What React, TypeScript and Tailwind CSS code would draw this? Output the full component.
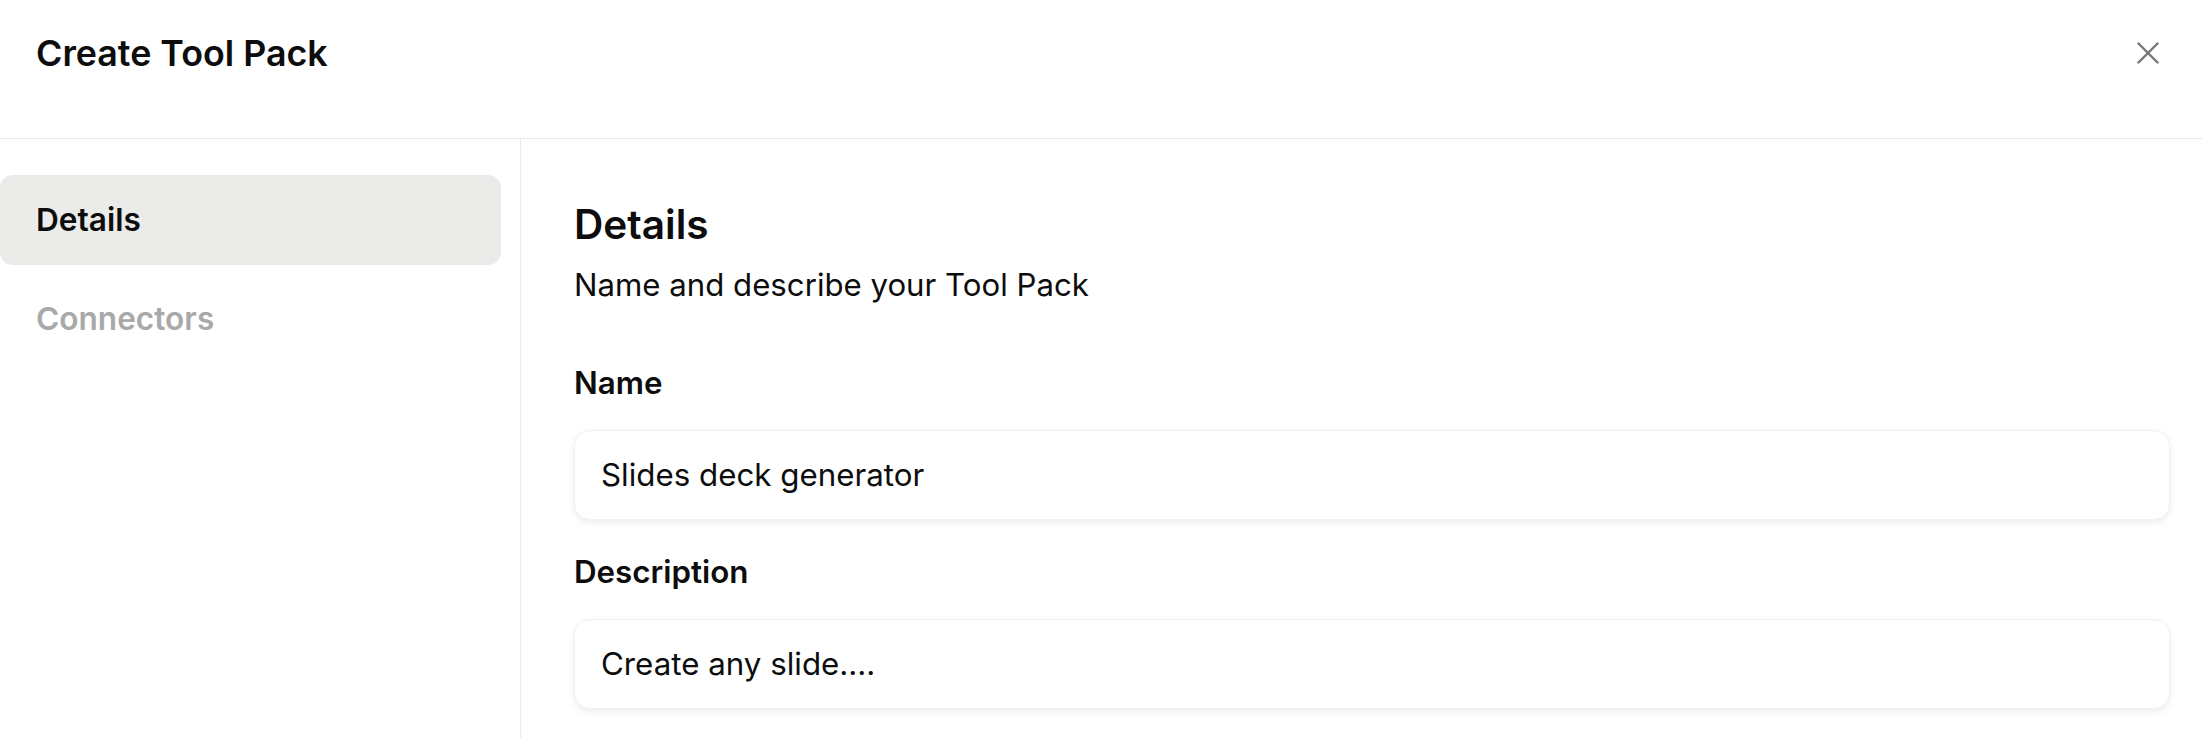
import React from 'react';

const CloseIcon: React.FC = () => (
  <svg width="22" height="22" viewBox="0 0 22 22" fill="none" stroke="#767676" strokeWidth="2.4" strokeLinecap="round">
    <path d="M1.5 1.5 L20.5 20.5" />
    <path d="M20.5 1.5 L1.5 20.5" />
  </svg>
);

const Field: React.FC<{ label: string; value: string; className?: string }> = ({ label, value, className }) => (
  <div className={className}>
    <div className="text-[31.3px] leading-[40px] font-semibold text-[#0d0d0d]">{label}</div>
    <div className="mt-[27px] h-[90px] flex items-center px-[26px] bg-white rounded-[16px] border border-[#f1f1f1] shadow-[0_3px_7px_rgba(0,0,0,0.07)]">
      <span className="text-[31.3px] text-[#0d0d0d]">{value}</span>
    </div>
  </div>
);

export default function App() {
  return (
    <div className="w-full h-[738px] bg-white overflow-hidden flex flex-col font-['Inter',sans-serif]">
      {/* header */}
      <div className="h-[139px] shrink-0 border-b border-[#e9e9e9] flex items-start justify-between pl-[36px] pr-[43px] pt-[31px]">
        <h1 className="text-[35.8px] leading-[44px] font-semibold text-[#0d0d0d]">Create Tool Pack</h1>
        <button className="h-[44px] flex items-center">
          <CloseIcon />
        </button>
      </div>

      <div className="flex flex-1 min-h-0">
        {/* sidebar */}
        <div className="w-[521px] shrink-0 border-r border-[#ececec] pt-[36px] flex flex-col gap-[9px]">
          <div className="w-[501px] h-[90px] rounded-[13px] bg-[#ebebea] flex items-center px-[36px]">
            <span className="text-[31.6px] font-semibold text-[#0d0d0d]">Details</span>
          </div>
          <div className="w-[501px] h-[90px] rounded-[13px] flex items-center px-[36px]">
            <span className="text-[31.6px] font-semibold text-[#a9a9a9]">Connectors</span>
          </div>
        </div>

        {/* main */}
        <div className="flex-1 pl-[53px] pr-[32px] pt-[62px]">
          <h2 className="text-[40.6px] leading-[48px] font-semibold text-[#0d0d0d]">Details</h2>
          <p className="mt-[16px] text-[31.2px] leading-[40px] text-[#0d0d0d]">Name and describe your Tool Pack</p>
          <Field className="mt-[58px]" label="Name" value="Slides deck generator" />
          <Field className="mt-[32px]" label="Description" value="Create any slide...." />
        </div>
      </div>
    </div>
  );
}
